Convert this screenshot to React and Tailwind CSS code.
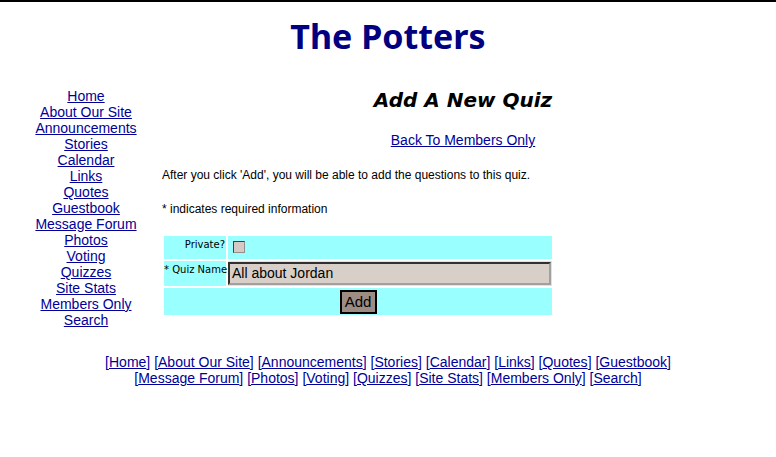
import React from "react";

// Site navigation, shared by the side column and the footer
const NAV_LINKS = [
  "Home",
  "About Our Site",
  "Announcements",
  "Stories",
  "Calendar",
  "Links",
  "Quotes",
  "Guestbook",
  "Message Forum",
  "Photos",
  "Voting",
  "Quizzes",
  "Site Stats",
  "Members Only",
  "Search",
];

const FOOTER_LINE_1 = NAV_LINKS.slice(0, 8);
const FOOTER_LINE_2 = NAV_LINKS.slice(8);

const FooterLine = ({ links }) => (
  <div className="leading-[16px]">
    {links.map((name, i) => (
      <React.Fragment key={name}>
        [<a href="#" className="underline">{name}</a>]
        {i < links.length - 1 ? " " : ""}
      </React.Fragment>
    ))}
  </div>
);

const App = () => {
  return (
    <div className="min-h-[457px] w-[776px] border-t-2 border-black bg-white font-['Liberation_Sans',Arial,sans-serif] text-black">
      {/* Site title */}
      <h1 className="pt-[15px] text-center font-['Noto_Sans',sans-serif] text-[34px] font-bold leading-[38px] text-[#000080]">
        The Potters
      </h1>

      <div className="mt-[33px] flex">
        {/* Side navigation */}
        <nav className="ml-[16px] flex w-[140px] flex-col items-center text-[14px] leading-[16px] text-[#000099]">
          {NAV_LINKS.map((name) => (
            <a key={name} href="#" className="underline">
              {name}
            </a>
          ))}
        </nav>

        {/* Main content */}
        <main className="ml-[6px] w-[392px]">
          <div className="ml-[210px] w-[182px] text-center">
            <h2 className="font-['DejaVu_Sans',sans-serif] text-[20px] font-bold italic leading-[24px] whitespace-nowrap">
              Add A New Quiz
            </h2>
            <a
              href="#"
              className="mt-[20px] block text-[14px] leading-[16px] text-[#000099] underline whitespace-nowrap"
            >
              Back To Members Only
            </a>
          </div>

          <p className="mt-[20px] text-[12px] leading-[14px]">
            After you click 'Add', you will be able to add the questions to this quiz.
          </p>
          <p className="mt-[20px] text-[12px] leading-[14px]">
            * indicates required information
          </p>

          {/* Quiz form */}
          <form className="mt-[18px] grid grid-cols-[62px_1fr] grid-rows-[23px_25px_27px] gap-[2px] bg-white p-[2px]">
            <div className="bg-[#99ffff] pr-[1px] pt-[3px] text-right font-['DejaVu_Sans',sans-serif] text-[10px] leading-[12px]">
              Private?
            </div>
            <div className="bg-[#99ffff] pl-[5px] pt-[5px]">
              <span className="block h-[12px] w-[12px] border border-t-[#404040] border-l-[#404040] border-b-[#909090] border-r-[#909090] bg-[#d6c8c4]" />
            </div>

            <div className="bg-[#99ffff] pt-[3px] text-right font-['DejaVu_Sans',sans-serif] text-[10px] leading-[12px] whitespace-nowrap">
              * Quiz Name
            </div>
            <div className="bg-[#99ffff] pt-[1px]">
              <div className="flex h-[23px] w-[323px] items-center border-2 border-t-[#303030] border-l-[#303030] border-b-[#a0a0a0] border-r-[#a0a0a0] bg-[#d8d0c8] pl-[2px] text-[14px]">
                All about Jordan
              </div>
            </div>

            <div className="col-span-2 flex items-center justify-center bg-[#99ffff]">
              <button
                type="button"
                className="h-[24px] w-[37px] border-2 border-black bg-[#9c8c84] text-[15px] leading-[16px]"
              >
                Add
              </button>
            </div>
          </form>
        </main>
      </div>

      {/* Footer navigation */}
      <footer className="mt-[26px] text-center text-[14px] text-[#000099]">
        <FooterLine links={FOOTER_LINE_1} />
        <FooterLine links={FOOTER_LINE_2} />
      </footer>
    </div>
  );
};

export default App;
